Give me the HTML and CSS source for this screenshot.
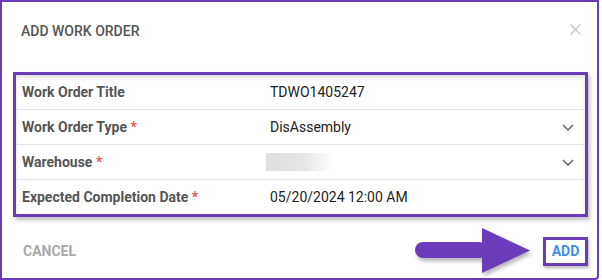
FILE: index.html
```html
<!DOCTYPE html>
<html lang="en">
<head>
    <meta charset="UTF-8" />
    <meta name="viewport" content="width=device-width, initial-scale=1.0" />
    <title>Add Work Order</title>
    <link rel="stylesheet" href="styles.css">
</head>
<body>
    <div class="dialog">
        <div class="dialog-header">
            <h2>ADD WORK ORDER</h2>
            <button class="close" aria-label="Close">
                <svg width="11" height="11" viewBox="0 0 11 11">
                    <path d="M0.5 0.5 L10.5 10.5 M10.5 0.5 L0.5 10.5" stroke="#c4c4c4" stroke-width="1.2" fill="none" />
                </svg>
            </button>
        </div>
        <div class="fields">
            <div class="field">
                <div class="label">Work Order Title</div>
                <div class="value">TDWO1405247</div>
            </div>
            <div class="field">
                <div class="label">Work Order Type <span class="req">*</span></div>
                <div class="value">DisAssembly</div>
                <svg class="chevron" width="12" height="7" viewBox="0 0 12 7">
                    <path d="M1 1 L6 6 L11 1" stroke="#6b6b6b" stroke-width="1.6" fill="none" />
                </svg>
            </div>
            <div class="field">
                <div class="label">Warehouse <span class="req">*</span></div>
                <div class="value"><span class="blurred"></span></div>
                <svg class="chevron" width="12" height="7" viewBox="0 0 12 7">
                    <path d="M1 1 L6 6 L11 1" stroke="#6b6b6b" stroke-width="1.6" fill="none" />
                </svg>
            </div>
            <div class="field">
                <div class="label">Expected Completion Date <span class="req">*</span></div>
                <div class="value">05/20/2024 12:00 AM</div>
            </div>
        </div>
        <div class="dialog-footer">
            <button class="cancel">CANCEL</button>
            <div class="add-group">
                <svg class="arrow" width="120" height="48" viewBox="0 0 120 48">
                    <rect x="3" y="15" width="72" height="16" rx="8" fill="#6a3cbb" />
                    <polygon points="70,1 118,23.5 70,46" fill="#6a3cbb" />
                </svg>
                <button class="add">ADD</button>
            </div>
        </div>
    </div>
</body>
</html>
```

FILE: styles.css
```css
* {
    box-sizing: border-box;
}
body {
    margin: 0;
    background: #fff;
    font-family: Roboto, "Liberation Sans", sans-serif;
}
.dialog {
    width: 599px;
    height: 280px;
    border: 2px solid #6a3cb8;
    border-radius: 0 0 4px 0;
    background: #fff;
}
.dialog-header {
    display: flex;
    justify-content: space-between;
    align-items: flex-start;
    padding: 19px 16px 0 19px;
}
h2 {
    margin: 0;
    font-size: 14px;
    font-weight: 500;
    line-height: 20px;
    color: #555;
}
.close {
    border: none;
    background: none;
    padding: 0;
    margin-top: 2px;
    width: 11px;
    height: 11px;
    cursor: pointer;
}
.fields {
    margin: 31px 9px 0 11px;
    border: 3px solid #6a3cb8;
    box-shadow: inset 0 3px 4px rgba(0, 0, 0, 0.12), 2px 3px 4px rgba(0, 0, 0, 0.25);
}
.field {
    display: flex;
    align-items: center;
    height: 35px;
    padding: 0 11px 0 6px;
    border-bottom: 1px solid #e3e3e3;
}
.field:last-child {
    height: 34px;
    border-bottom: none;
}
.label {
    width: 248px;
    font-size: 14px;
    font-weight: 700;
    color: #555;
}
.req {
    color: #f05555;
}
.value {
    flex: 1;
    font-size: 14px;
    color: #222;
}
.blurred {
    display: block;
    width: 68px;
    height: 18px;
    margin-left: -4px;
    background: linear-gradient(to right, #dedede, #e6e6e6 55%, #fff);
}
.chevron {
    display: block;
}
.dialog-footer {
    display: flex;
    justify-content: space-between;
    align-items: center;
    margin-top: 10px;
    padding: 0 9px 0 19px;
}
.cancel {
    border: none;
    background: none;
    padding: 0 0 0 2px;
    font-family: inherit;
    font-size: 14px;
    font-weight: 700;
    color: #a9a9a9;
    cursor: pointer;
}
.add-group {
    display: flex;
    align-items: center;
    gap: 11px;
}
.arrow {
    display: block;
    filter: drop-shadow(2px 3px 2px rgba(0, 0, 0, 0.3));
}
.add {
    width: 45px;
    height: 29px;
    padding: 0;
    border: 3px solid #6a3cb8;
    background: #fff;
    font-family: inherit;
    font-size: 14px;
    font-weight: 700;
    color: #3f8de6;
    box-shadow: 1px 2px 3px rgba(0, 0, 0, 0.3);
    cursor: pointer;
}
```
